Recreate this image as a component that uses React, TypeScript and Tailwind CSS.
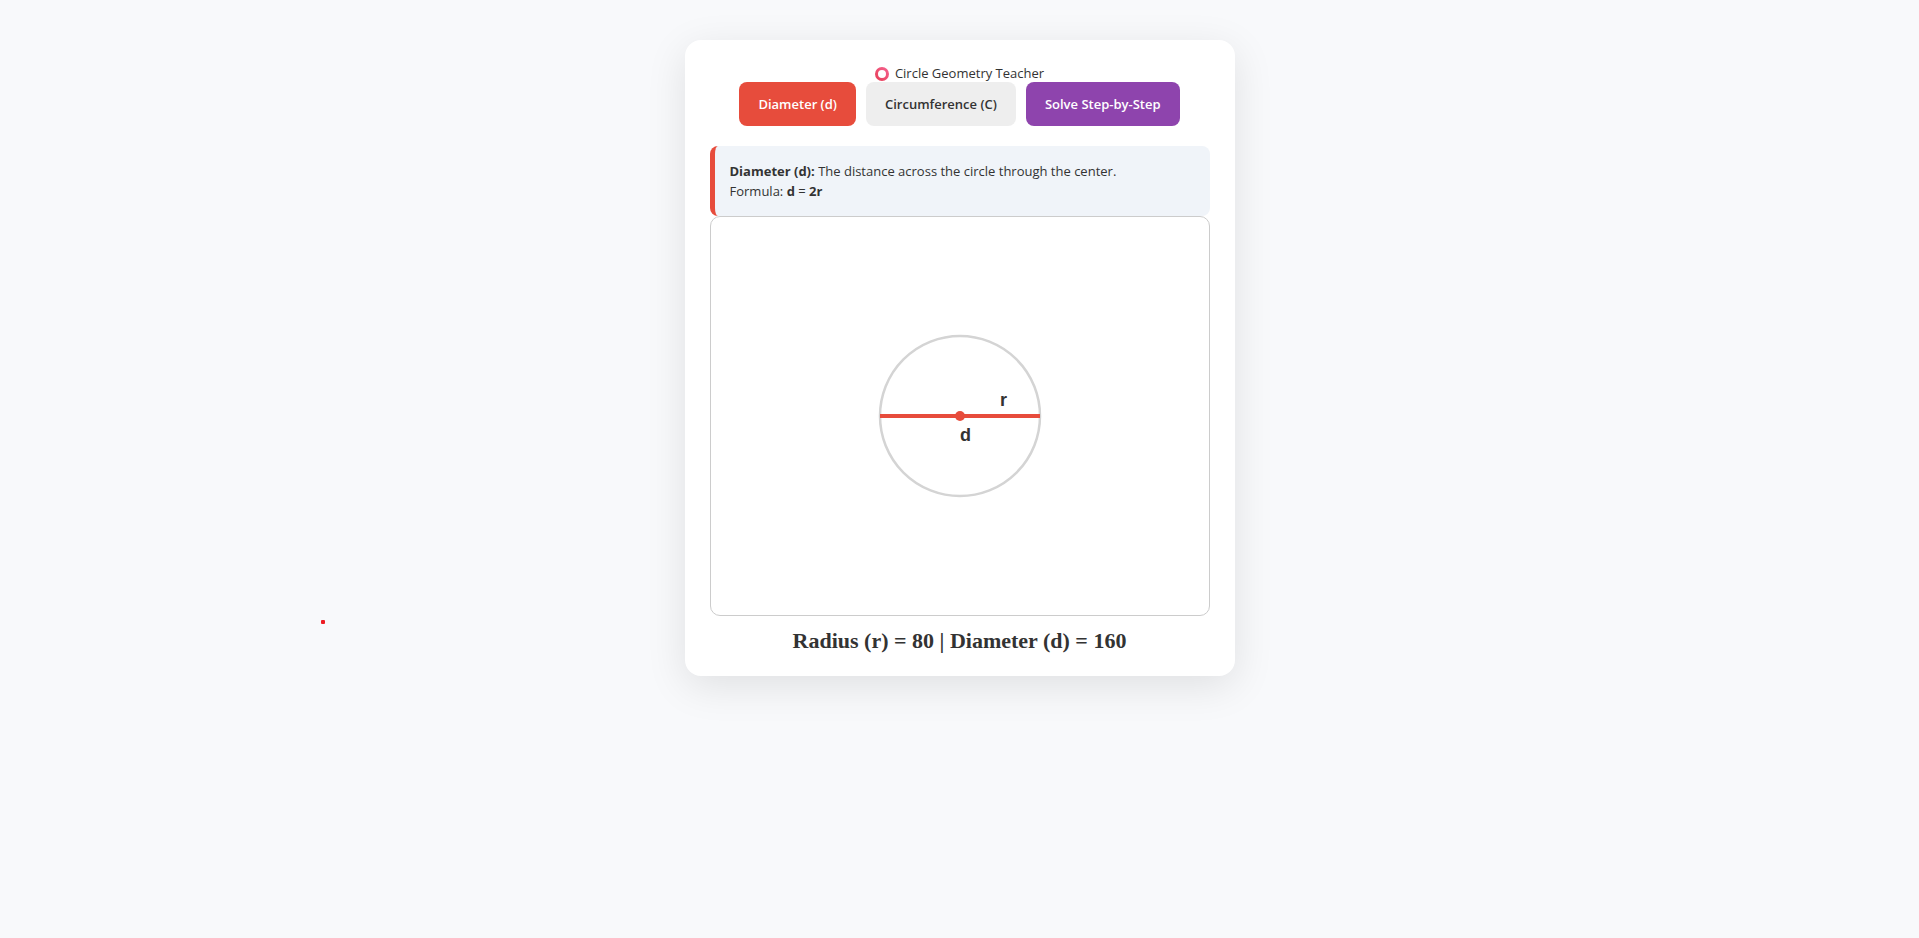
import { useState } from 'react'

type Mode = 'diameter' | 'circumference' | 'solve'

const RADIUS = 80
const CX = 249
const CY = 199

const bar: Record<Mode, string> = {
  diameter:      'border-[#e74c3c]',
  circumference: 'border-[#3498db]',
  solve:         'border-[#8e44ad]',
}

function RingIcon() {
  return (
    <svg width="14" height="14" viewBox="0 0 14 14" aria-hidden="true">
      <defs>
        <linearGradient id="ring" x1="1" y1="0" x2="0" y2="1">
          <stop offset="0" stopColor="#f4608c" />
          <stop offset="1" stopColor="#e8405a" />
        </linearGradient>
      </defs>
      <circle cx="7" cy="7" r="5.5" fill="none" stroke="url(#ring)" strokeWidth="3" />
    </svg>
  )
}

function Explanation({ mode }: { mode: Mode }) {
  if (mode === 'diameter') {
    return (
      <>
        <strong>Diameter (d):</strong> The distance across the circle through the center.<br />
        Formula: <strong>d</strong> = <strong>2r</strong>
      </>
    )
  }
  if (mode === 'circumference') {
    return (
      <>
        <strong>Circumference (C):</strong> The distance around the circle.<br />
        Formula: <strong>C</strong> = <strong>2πr</strong>
      </>
    )
  }
  return (
    <>
      <strong>Step 1:</strong> d = 2 × {RADIUS} = {RADIUS * 2}<br />
      <strong>Step 2:</strong> C = π × {RADIUS * 2} = {(Math.PI * RADIUS * 2).toFixed(2)}
    </>
  )
}

function CircleDiagram({ mode }: { mode: Mode }) {
  const around = mode === 'circumference'

  return (
    <svg viewBox="0 0 498 398" className="block w-full" role="img" aria-label="Circle diagram">
      <circle
        cx={CX}
        cy={CY}
        r={RADIUS}
        fill="none"
        stroke={around ? '#3498db' : '#d4d4d4'}
        strokeWidth={around ? 4 : 2.5}
      />
      {!around && (
        <line x1={CX - RADIUS} y1={CY} x2={CX + RADIUS} y2={CY} stroke="#e74c3c" strokeWidth="4" />
      )}
      <circle cx={CX} cy={CY} r="5" fill="#e74c3c" />
      <g className="font-['Liberation_Sans',Arial,sans-serif] text-[18px] font-bold" fill="#333333">
        <text x={CX + 40} y={CY - 10}>r</text>
        {!around && <text x={CX} y={CY + 25}>d</text>}
      </g>
    </svg>
  )
}

export default function App() {
  const [mode, setMode] = useState<Mode>('diameter')

  const buttonBase = 'rounded-lg px-[19px] py-3 leading-5 font-semibold cursor-pointer'

  return (
    <div className="relative min-h-screen bg-[#f8f9fb] px-4 py-10 font-['Open_Sans','Noto_Sans',sans-serif] text-[13px] text-[#333333]">
      <main className="mx-auto w-full max-w-[550px] rounded-2xl bg-white px-[25px] pt-[25px] pb-[23px] shadow-[0_10px_40px_rgba(0,0,0,0.1)]">
        <div className="flex items-center justify-center gap-[6px] leading-[17px]">
          <RingIcon />
          <span>Circle Geometry Teacher</span>
        </div>

        <div className="mb-5 flex flex-wrap justify-center gap-[10px]">
          <button
            type="button"
            onClick={() => setMode('diameter')}
            className={`${buttonBase} ${mode === 'diameter' ? 'bg-[#e74c3c] text-white' : 'bg-[#eeeeee]'}`}
          >
            Diameter (d)
          </button>
          <button
            type="button"
            onClick={() => setMode('circumference')}
            className={`${buttonBase} ${mode === 'circumference' ? 'bg-[#3498db] text-white' : 'bg-[#eeeeee]'}`}
          >
            Circumference (C)
          </button>
          <button
            type="button"
            onClick={() => setMode('solve')}
            className={`${buttonBase} bg-[#8e44ad] text-white`}
          >
            Solve Step-by-Step
          </button>
        </div>

        <div className={`rounded-lg border-l-[5px] bg-[#f0f4f9] p-[15px] leading-5 ${bar[mode]}`}>
          <Explanation mode={mode} />
        </div>

        <div className="overflow-hidden rounded-[10px] border border-[#cccccc]">
          <CircleDiagram mode={mode} />
        </div>

        <p className="mt-3 text-center font-['Liberation_Serif','Times_New_Roman',serif] text-[22px] leading-[25px] font-bold">
          Radius (r) = {RADIUS} | Diameter (d) = {RADIUS * 2}
        </p>
      </main>

      {/* pointer mark */}
      <span className="absolute top-[620px] left-[321px] size-1 rounded-[1px] bg-[#ed1c24]" />
    </div>
  )
}
